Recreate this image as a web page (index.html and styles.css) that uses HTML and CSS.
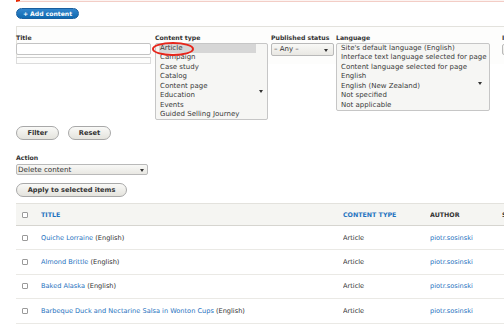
FILE: index.html
```html
<!DOCTYPE html>
<html lang="en">
<head>
<meta charset="utf-8">
<title>Content</title>
<link rel="stylesheet" href="styles.css">
</head>
<body>
<div class="msg"></div>
<div class="page">
  <a class="btn-add" href="#">+ Add content</a>
  <form class="filters">
    <div class="filter-box">
      <div class="field f-title">
        <label class="lbl">Title</label>
        <input class="text" type="text">
        <div class="ac-box"></div>
      </div>
      <div class="field f-type">
        <label class="lbl">Content type</label>
        <div class="listbox lb-type">
          <div class="opt sel">Article</div>
          <div class="opt">Campaign</div>
          <div class="opt">Case study</div>
          <div class="opt">Catalog</div>
          <div class="opt">Content page</div>
          <div class="opt">Education</div>
          <div class="opt">Events</div>
          <div class="opt">Guided Selling Journey</div>
          <span class="arrow"></span>
        </div>
        <span class="circle"></span>
      </div>
      <div class="field f-status">
        <label class="lbl">Published status</label>
        <div class="select sel-status">– Any –<span class="arrow"></span></div>
      </div>
      <div class="field f-lang">
        <label class="lbl">Language</label>
        <div class="listbox lb-lang">
          <div class="opt">Site's default language (English)</div>
          <div class="opt">Interface text language selected for page</div>
          <div class="opt">Content language selected for page</div>
          <div class="opt">English</div>
          <div class="opt">English (New Zealand)</div>
          <div class="opt">Not specified</div>
          <div class="opt">Not applicable</div>
          <span class="arrow"></span>
        </div>
      </div>
      <div class="field f-items">
        <label class="lbl">Items per page</label>
        <div class="select sel-items">50</div>
      </div>
    </div>
    <div class="actions">
      <button class="btn" type="button">Filter</button>
      <button class="btn" type="button">Reset</button>
    </div>
  </form>

  <div class="bulk">
    <label class="lbl">Action</label>
    <div class="select sel-action">Delete content<span class="arrow"></span></div>
    <button class="btn btn-apply" type="button">Apply to selected items</button>
  </div>

  <table class="content-table">
    <thead>
      <tr>
        <th class="c-cb"><span class="cb"></span></th>
        <th class="c-title"><a href="#">Title</a></th>
        <th class="c-type"><a href="#">Content type</a></th>
        <th class="c-author">Author</th>
        <th class="c-status">Status</th>
      </tr>
    </thead>
    <tbody>
      <tr>
        <td class="c-cb"><span class="cb"></span></td>
        <td class="c-title"><a href="#">Quiche Lorraine</a> (English)</td>
        <td class="c-type">Article</td>
        <td class="c-author"><a href="#">piotr.sosinski</a></td>
        <td class="c-status"></td>
      </tr>
      <tr>
        <td class="c-cb"><span class="cb"></span></td>
        <td class="c-title"><a href="#">Almond Brittle</a> (English)</td>
        <td class="c-type">Article</td>
        <td class="c-author"><a href="#">piotr.sosinski</a></td>
        <td class="c-status"></td>
      </tr>
      <tr>
        <td class="c-cb"><span class="cb"></span></td>
        <td class="c-title"><a href="#">Baked Alaska</a> (English)</td>
        <td class="c-type">Article</td>
        <td class="c-author"><a href="#">piotr.sosinski</a></td>
        <td class="c-status"></td>
      </tr>
      <tr>
        <td class="c-cb"><span class="cb"></span></td>
        <td class="c-title"><a href="#">Barbeque Duck and Nectarine Salsa in Wonton Cups</a> (English)</td>
        <td class="c-type">Article</td>
        <td class="c-author"><a href="#">piotr.sosinski</a></td>
        <td class="c-status"></td>
      </tr>
    </tbody>
  </table>
</div>
</body>
</html>
```
FILE: styles.css
```css
* { box-sizing: border-box; }
html, body { margin: 0; padding: 0; overflow: hidden; }
body {
  width: 504px;
  height: 325px;
  background: #fff;
  color: #333;
  font-family: "DejaVu Sans", "Liberation Sans", sans-serif;
}
a { color: #1f73c0; text-decoration: none; }

.msg {
  margin-left: 16px;
  height: 2px;
  background: #fcf4f2;
  border-left: 4px solid #e62600;
  border-bottom: 1px solid #f3cdc6;
}
.page { padding-left: 16px; }

.btn-add {
  display: flex;
  width: 63px;
  height: 11px;
  margin-top: 6px;
  align-items: center;
  justify-content: center;
  border: 1px solid #1b5f9e;
  border-radius: 6px;
  background: linear-gradient(#3285cc, #0f69b0);
  color: #fff;
  font-size: 6.1px;
  font-weight: bold;
}

.filter-box {
  display: flex;
  align-items: flex-start;
  height: 38px;
  margin-top: 7px;
  padding-top: 7px;
  border-top: 1px solid #e3e2dd;
  border-left: 1px solid #e3e2dd;
  background: #fdfdfc;
}
.field {
  position: relative;
  display: flex;
  flex-direction: column;
  flex-shrink: 0;
}
.lbl {
  display: block;
  height: 7px;
  margin-bottom: 2px;
  font-size: 6.2px;
  line-height: 7px;
  font-weight: bold;
  white-space: nowrap;
  color: #333;
}
.f-title { width: 135px; margin-left: -1px; }
.text {
  display: block;
  width: 135px;
  height: 12px;
  margin: 0;
  padding: 0;
  border: 1px solid #c3c3c3;
  border-radius: 2px;
  background: #fff;
}
.ac-box {
  height: 7px;
  margin-top: 2px;
  border: 1px solid #dcdcdc;
  border-top-color: #cfcfcf;
  background: #fdfdfc;
}
.f-type { width: 113px; margin-left: 4px; }
.f-status { width: 63px; margin-left: 3px; }
.f-lang { width: 154px; margin-left: 2px; }
.f-items { width: 80px; margin-left: 12px; }

.listbox {
  position: relative;
  padding: 0 11px 0 3px;
  border: 1px solid #c6c6c6;
  border-radius: 2px;
  background: #f6f6f4;
}
.opt {
  height: 9.43px;
  padding-left: 1px;
  font-size: 7px;
  line-height: 9.43px;
  white-space: nowrap;
  color: #3a3a3a;
}
.opt.sel { background: #d6d6d6; }

.arrow {
  position: absolute;
  width: 0;
  height: 0;
  border-left: 2px solid transparent;
  border-right: 2px solid transparent;
  border-top: 3px solid #333;
}
.lb-type .arrow { right: 4px; top: 61%; }
.lb-lang .arrow { right: 7px; top: 58%; }

.circle {
  position: absolute;
  left: -3px;
  top: 8px;
  width: 42px;
  height: 14px;
  border: 2px solid #e6261b;
  border-radius: 50%;
}

.select {
  position: relative;
  height: 13px;
  padding-left: 2px;
  border: 1px solid #b9b9b9;
  border-radius: 2px;
  background: linear-gradient(#f8f8f6, #e9e8e3);
  font-size: 7px;
  line-height: 11px;
  white-space: nowrap;
  color: #333;
}
.sel-status .arrow { right: 5px; top: 5px; }
.sel-items { margin-top: 1px; height: 11px; color: transparent; }

.actions {
  display: flex;
  gap: 9px;
  margin-top: 62px;
}
.btn {
  display: flex;
  align-items: center;
  justify-content: center;
  width: 43px;
  height: 14px;
  margin: 0;
  padding: 0;
  border: 1px solid #a8a8a8;
  border-radius: 8px;
  background: linear-gradient(#f9f9f7, #e4e3dd);
  color: #333;
  font-family: "DejaVu Sans", sans-serif;
  font-size: 6.7px;
  font-weight: bold;
}

.bulk { margin-top: 14px; }
.bulk .lbl { margin-bottom: 3px; }
.sel-action {
  width: 132px;
  height: 11px;
  padding-left: 1px;
  font-size: 7.2px;
  line-height: 9px;
}
.sel-action .arrow { right: 3px; top: 4px; }
.btn-apply {
  width: 111px;
  margin-top: 8px;
  font-size: 6.6px;
}

.content-table {
  width: 546px;
  margin-top: 6px;
  table-layout: fixed;
  border-collapse: separate;
  border-spacing: 0;
  font-size: 6.6px;
}
.content-table th,
.content-table td {
  padding: 0;
  text-align: left;
  vertical-align: middle;
  white-space: nowrap;
  overflow: hidden;
}
.content-table thead tr { height: 23px; }
.content-table th {
  border-top: 1px solid #e3e2dd;
  border-bottom: 1px solid #d6d5d0;
  background: #f5f5f2;
  font-size: 6.3px;
  font-weight: bold;
  text-transform: uppercase;
  color: #333;
}
.content-table tbody tr { height: 24.4px; }
.content-table td { border-bottom: 1px solid #eae9e5; color: #333; }
.c-cb { width: 25px; padding-left: 6px !important; }
.c-title { width: 302px; }
.c-type { width: 87px; }
.c-author { width: 72px; }
.c-status { width: 60px; }
.cb {
  display: block;
  width: 6px;
  height: 6px;
  border: 1px solid #9a9a9a;
  border-radius: 1px;
  background: #fff;
}
```
